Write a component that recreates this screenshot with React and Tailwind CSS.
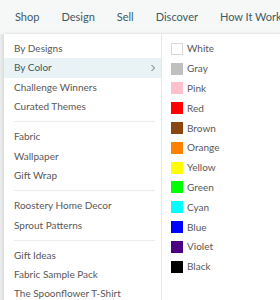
import React from "react";

const groups = [
  ["By Designs", "By Color", "Challenge Winners", "Curated Themes"],
  ["Fabric", "Wallpaper", "Gift Wrap"],
  ["Roostery Home Decor", "Sprout Patterns"],
  ["Gift Ideas", "Fabric Sample Pack", "The Spoonflower T-Shirt"],
];

const colors = [
  ["White", "bg-white border border-[#d8d8d8]"],
  ["Gray", "bg-[#c0c0c0]"],
  ["Pink", "bg-[#ffc0cb]"],
  ["Red", "bg-[#ff0000]"],
  ["Brown", "bg-[#8b4513]"],
  ["Orange", "bg-[#ff8000]"],
  ["Yellow", "bg-[#ffff00]"],
  ["Green", "bg-[#00ff00]"],
  ["Cyan", "bg-[#00ffff]"],
  ["Blue", "bg-[#0000ff]"],
  ["Violet", "bg-[#4b0082]"],
  ["Black", "bg-[#000000]"],
];

export default function App() {
  return (
    <div
      className="w-[280px] h-[300px] overflow-hidden bg-[#e9eaea] flex flex-col"
      style={{ fontFamily: "Lato, 'Open Sans', sans-serif" }}
    >
      <nav className="h-[34px] shrink-0 bg-[#f6f7f7] flex items-center pl-[15px] gap-[22px] text-[11px] text-[#3e5b63] whitespace-nowrap">
        <span>Shop</span>
        <span>Design</span>
        <span>Sell</span>
        <span>Discover</span>
        <span>How It Works</span>
      </nav>
      <div className="flex flex-1 ml-[4px] bg-white shadow-[0_0_3px_rgba(0,0,0,0.15)]">
        <div className="w-[158px] shrink-0 border-r border-[#e6e6e6] pt-[5px]">
          {groups.map((g, gi) => (
            <div key={gi}>
              {gi > 0 && <div className="ml-[10px] mr-[6px] my-[5px] border-t border-[#ececec]" />}
              {g.map((item) => {
                const active = item === "By Color";
                return (
                  <div
                    key={item}
                    className={`h-[19.3px] flex items-center justify-between pl-[10px] pr-[5px] text-[10px] whitespace-nowrap ${
                      active ? "bg-[#e9f3f6] text-[#3a5c66]" : "text-[#585858]"
                    }`}
                  >
                    <span>{item}</span>
                    {active && (
                      <svg width="6" height="8" viewBox="0 0 6 8" fill="none">
                        <path d="M1.5 1 L4.5 4 L1.5 7" stroke="#6b6b6b" strokeWidth="1" />
                      </svg>
                    )}
                  </div>
                );
              })}
            </div>
          ))}
        </div>
        <div className="flex-1 pt-[5px] pl-[9px]">
          {colors.map(([name, cls]) => (
            <div key={name} className="h-[19.8px] flex items-center gap-[4px]">
              <span className={`w-[12px] h-[12px] shrink-0 box-border ${cls}`} />
              <span className="text-[10px] text-[#585858]">{name}</span>
            </div>
          ))}
        </div>
      </div>
    </div>
  );
}
